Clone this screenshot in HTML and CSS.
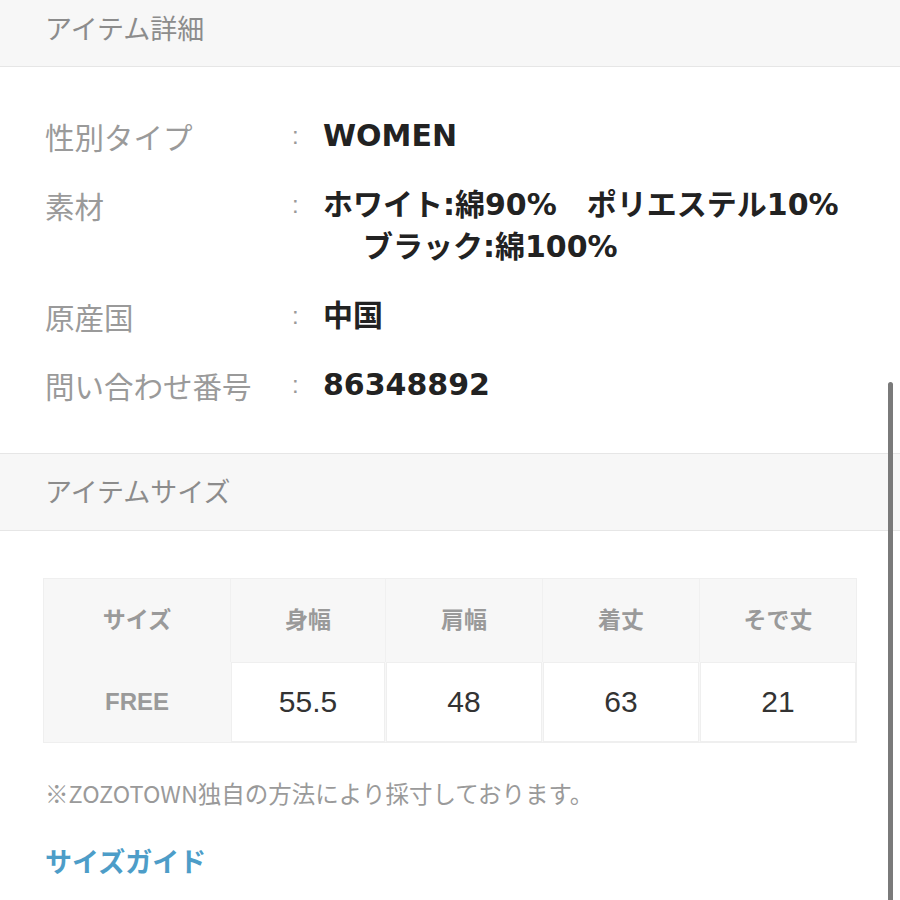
FILE: index.html
```html
<!DOCTYPE html>
<html lang="ja">
<head>
<meta charset="utf-8">
<link rel="stylesheet" href="styles.css">
</head>
<body>
<div class="page">
  <div class="band band-top">アイテム詳細</div>
  <div class="details">
    <div class="row">
      <div class="label">性別タイプ</div>
      <div class="colon">:</div>
      <div class="value">WOMEN</div>
    </div>
    <div class="row">
      <div class="label">素材</div>
      <div class="colon">:</div>
      <div class="value">ホワイト:綿90%　ポリエステル10%<br><span class="indent">ブラック:綿100%</span></div>
    </div>
    <div class="row">
      <div class="label">原産国</div>
      <div class="colon">:</div>
      <div class="value">中国</div>
    </div>
    <div class="row">
      <div class="label">問い合わせ番号</div>
      <div class="colon">:</div>
      <div class="value">86348892</div>
    </div>
  </div>
  <div class="band band-mid">アイテムサイズ</div>
  <div class="sizes">
    <div class="table">
      <div class="cell head first">サイズ</div>
      <div class="cell head">身幅</div>
      <div class="cell head">肩幅</div>
      <div class="cell head">着丈</div>
      <div class="cell head">そで丈</div>
      <div class="cell first data-first">FREE</div>
      <div class="cell data">55.5</div>
      <div class="cell data">48</div>
      <div class="cell data">63</div>
      <div class="cell data">21</div>
    </div>
    <p class="note">※ZOZOTOWN独自の方法により採寸しております。</p>
    <a class="guide" href="#">サイズガイド</a>
  </div>
</div>
<div class="scrollbar"></div>
</body>
</html>
```

FILE: styles.css
```css
html, body {
  margin: 0;
  padding: 0;
  background: #ffffff;
}
body {
  font-family: "Liberation Sans", "Noto Sans CJK JP", sans-serif;
  width: 900px;
  height: 900px;
  overflow: hidden;
  position: relative;
}
.page {
  width: 900px;
}
.band {
  background: #f7f7f7;
  color: #8c8c8c;
  font-family: "Noto Sans CJK JP", sans-serif;
  font-size: 27px;
  line-height: 40px;
  padding-left: 45px;
  border-bottom: 1px solid #e6e6e6;
}
.band-top {
  padding-top: 8px;
  padding-bottom: 18px;
}
.band-mid {
  border-top: 1px solid #e6e6e6;
  padding-top: 17px;
  padding-bottom: 19px;
}
.details {
  padding: 48px 0 47px 45px;
  display: flex;
  flex-direction: column;
  gap: 27px;
}
.row {
  display: flex;
  align-items: flex-start;
  line-height: 42px;
}
.label {
  width: 247px;
  color: #9a9a9a;
  font-size: 29.5px;
  font-family: "Noto Sans CJK JP", sans-serif;
}
.colon {
  width: 31px;
  color: #9a9a9a;
  font-size: 24px;
}
.value {
  color: #222;
  font-weight: bold;
  font-size: 30px;
  font-family: "DejaVu Sans", "Noto Sans CJK JP", sans-serif;
}
.indent {
  padding-left: 40px;
}
.sizes {
  padding: 47px 43px 0 43px;
}
.table {
  display: grid;
  grid-template-columns: 186px 155px 157px 157px 157px;
  grid-template-rows: 83px 80px;
  width: 814px;
  background: #f7f7f7;
  border: 1px solid #efefef;
  box-sizing: border-box;
}
.cell {
  display: flex;
  align-items: center;
  justify-content: center;
  border-left: 1px solid #f0f0f0;
}
.cell.first {
  border-left: none;
}
.head {
  color: #9a9a9a;
  font-weight: bold;
  font-size: 23px;
  padding-bottom: 6px;
  font-family: "Noto Sans CJK JP", sans-serif;
}
.data-first {
  color: #9a9a9a;
  font-weight: bold;
  font-size: 24px;
}
.data {
  background: #ffffff;
  color: #333;
  font-size: 30px;
  border: 1px solid #efefef;
  margin-left: 1px;
}
.note {
  margin: 34px 0 0 2px;
  font-size: 23.5px;
  line-height: 32px;
  color: #9a9a9a;
  font-family: "Noto Sans CJK JP", sans-serif;
}
.guide {
  display: block;
  margin: 34px 0 0 2px;
  font-size: 27px;
  line-height: 36px;
  color: #4d9dc8;
  font-weight: bold;
  text-decoration: none;
  font-family: "Noto Sans CJK JP", sans-serif;
}
.scrollbar {
  position: absolute;
  right: 7px;
  top: 382px;
  width: 5px;
  height: 530px;
  border-radius: 3px;
  background: #7a7a7a;
}
```
